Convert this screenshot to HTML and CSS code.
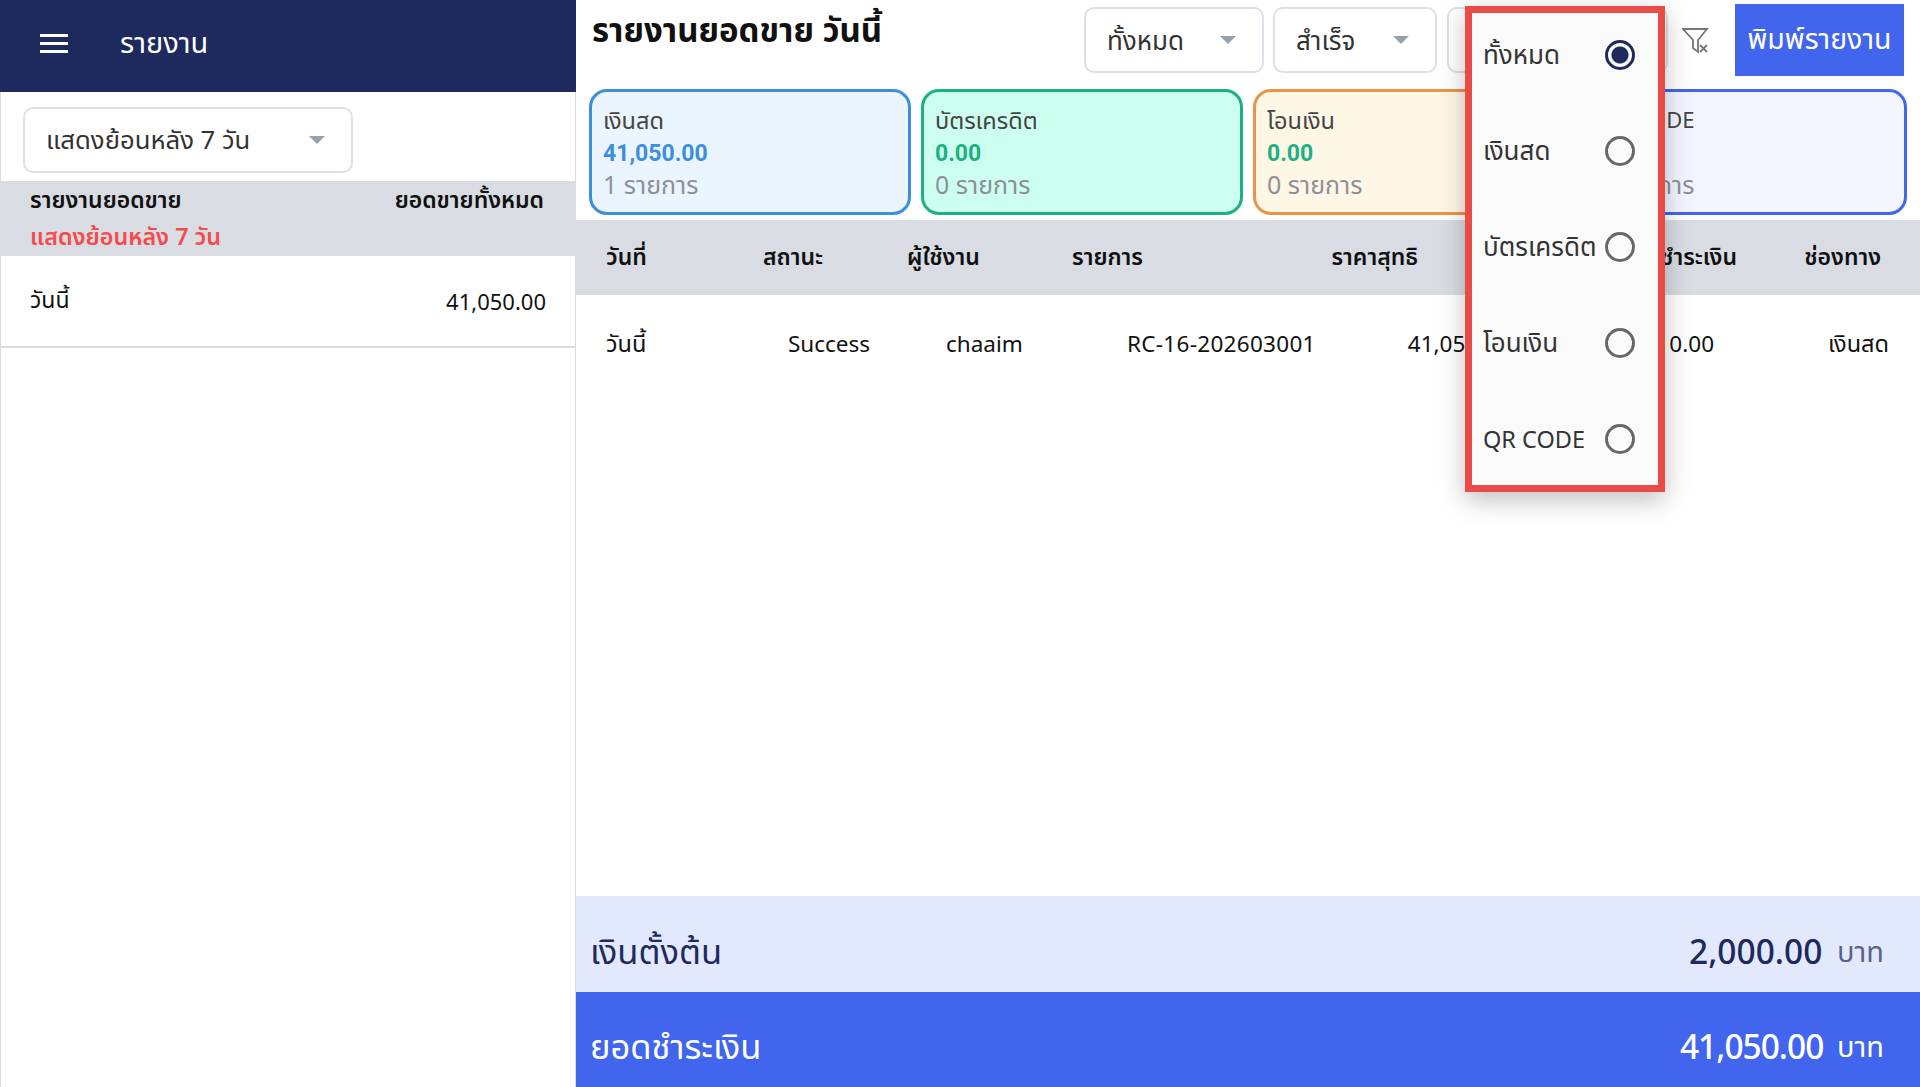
FILE: index.html
```html
<!DOCTYPE html>
<html lang="th">
<head>
    <meta charset="UTF-8">
    <title>รายงาน</title>
    <link rel="stylesheet" href="styles.css">
</head>
<body>
    <div class="app">
        <aside class="sidebar">
            <header class="side-header">
                <svg class="menu-icon" width="28" height="19" viewBox="0 0 28 19"><path d="M0 1.5h28M0 9.5h28M0 17.5h28" stroke="#fff" stroke-width="3"/></svg>
                <span class="side-title">รายงาน</span>
            </header>
            <div class="side-filter">
                <div class="select select-range">
                    <span>แสดงย้อนหลัง 7 วัน</span>
                    <i class="caret"></i>
                </div>
            </div>
            <div class="side-band">
                <div class="band-top">
                    <span>รายงานยอดขาย</span>
                    <span>ยอดขายทั้งหมด</span>
                </div>
                <div class="band-note">แสดงย้อนหลัง 7 วัน</div>
            </div>
            <div class="side-row">
                <span class="side-day">วันนี้</span>
                <span class="side-total">41,050.00</span>
            </div>
        </aside>

        <main class="content">
            <div class="topbar">
                <h1>รายงานยอดขาย วันนี้</h1>
                <div class="select select-a"><span>ทั้งหมด</span><i class="caret"></i></div>
                <div class="select select-b"><span>สำเร็จ</span><i class="caret"></i></div>
                <div class="select select-c"><span>ทั้งหมด</span><i class="caret"></i></div>
                <svg class="filter-icon" width="28" height="26" viewBox="0 0 28 26" fill="none" stroke="#777" stroke-width="1.8">
                    <path d="M1 1h24l-9 11v12l-5-4v-8z"/>
                    <path d="M18 17l7 7M25 17l-7 7"/>
                </svg>
                <button class="print-btn">พิมพ์รายงาน</button>
            </div>

            <div class="cards">
                <div class="card card-blue">
                    <div class="card-label">เงินสด</div>
                    <div class="card-value">41,050.00</div>
                    <div class="card-count">1 รายการ</div>
                </div>
                <div class="card card-green">
                    <div class="card-label">บัตรเครดิต</div>
                    <div class="card-value">0.00</div>
                    <div class="card-count">0 รายการ</div>
                </div>
                <div class="card card-orange">
                    <div class="card-label">โอนเงิน</div>
                    <div class="card-value">0.00</div>
                    <div class="card-count">0 รายการ</div>
                </div>
                <div class="card card-indigo">
                    <div class="card-label card-latin">QR CODE</div>
                    <div class="card-value">0.00</div>
                    <div class="card-count">0 รายการ</div>
                </div>
            </div>

            <div class="thead">
                <span>วันที่</span>
                <span>สถานะ</span>
                <span>ผู้ใช้งาน</span>
                <span>รายการ</span>
                <span class="right">ราคาสุทธิ</span>
                <span class="right">ยอดชำระเงิน</span>
                <span class="right">ช่องทาง</span>
            </div>
            <div class="trow">
                <span class="cell-th">วันนี้</span>
                <span>Success</span>
                <span>chaaim</span>
                <span class="cell-id">RC-16-202603001</span>
                <span class="right">41,050.00</span>
                <span class="right">0.00</span>
                <span class="right cell-th">เงินสด</span>
            </div>

            <div class="summary">
                <div class="sum-row sum-light">
                    <span>เงินตั้งต้น</span>
                    <span class="sum-amount">2,000.00 <small>บาท</small></span>
                </div>
                <div class="sum-row sum-blue">
                    <span>ยอดชำระเงิน</span>
                    <span class="sum-amount">41,050.00 <small>บาท</small></span>
                </div>
            </div>
        </main>
    </div>

    <div class="popup">
        <label class="opt"><span>ทั้งหมด</span><i class="radio on"></i></label>
        <label class="opt"><span>เงินสด</span><i class="radio"></i></label>
        <label class="opt"><span>บัตรเครดิต</span><i class="radio"></i></label>
        <label class="opt"><span>โอนเงิน</span><i class="radio"></i></label>
        <label class="opt opt-latin"><span>QR CODE</span><i class="radio"></i></label>
    </div>
</body>
</html>
```

FILE: styles.css
```css
* {
    box-sizing: border-box;
}

body {
    margin: 0;
    height: 1087px;
    overflow: hidden;
    background: #fff;
    color: #111;
    font-family: 'Noto Sans Thai', 'Noto Sans', 'Noto Sans CJK SC', sans-serif;
}

.app {
    display: flex;
    height: 1087px;
}

.sidebar {
    width: 576px;
    flex: none;
    border-left: 1px solid #ddd;
    border-right: 1px solid #ddd;
}

.side-header {
    height: 92px;
    margin-left: -1px;
    margin-right: -1px;
    background: #1e2a5e;
    color: #fff;
    display: flex;
    align-items: center;
    padding-left: 40px;
    gap: 52px;
}

.menu-icon {
    margin-bottom: 5px;
}

.side-title {
    font-size: 29px;
    margin-bottom: 4px;
}

.side-filter {
    padding: 15px 0 8px 22px;
}

.select {
    height: 66px;
    border: 2px solid #dde0e6;
    border-radius: 10px;
    background: #fff;
    display: flex;
    align-items: center;
    justify-content: space-between;
    padding: 3px 26px 0 21px;
    font-size: 26px;
    color: #333;
}

.caret {
    width: 0;
    height: 0;
    margin-bottom: 3px;
    border-left: 8px solid transparent;
    border-right: 8px solid transparent;
    border-top: 8px solid #98a0aa;
}

.select-range {
    width: 330px;
    font-size: 25.7px;
}

.side-band {
    height: 75px;
    background: #d9dce3;
    padding: 3px 31px 0 29px;
    font-size: 23px;
    font-weight: 600;
}

.band-top {
    display: flex;
    justify-content: space-between;
}

.band-note {
    color: #f44c4c;
    font-size: 23.3px;
    margin-top: 2px;
}

.side-row {
    height: 92px;
    border-bottom: 2px solid #ddd;
    padding: 0 29px;
    display: flex;
    align-items: center;
    justify-content: space-between;
    font-size: 22px;
}

.side-day {
    font-size: 23px;
}

.side-total {
    padding-top: 4px;
}

.content {
    flex: 1;
    min-width: 0;
    display: flex;
    flex-direction: column;
}

.topbar {
    height: 89px;
    display: flex;
    align-items: flex-start;
    padding: 7px 16px 0 16px;
}

.topbar h1 {
    margin: 0;
    font-size: 33px;
    font-weight: 700;
    line-height: 50px;
    width: 492px;
    flex: none;
    white-space: nowrap;
}

.select-a {
    width: 180px;
}

.select-b {
    width: 164px;
    margin-left: 9px;
}

.select-c {
    width: 221px;
    margin-left: 10px;
}

.filter-icon {
    margin: 21px 0 0 14px;
}

.print-btn {
    width: 169px;
    height: 72px;
    margin: -3px 0 0 25px;
    padding: 0;
    border: none;
    background: #4165ec;
    color: #fff;
    font: inherit;
    font-size: 28.5px;
    white-space: nowrap;
}

.cards {
    display: flex;
    gap: 10px;
    padding: 0 13px;
}

.card {
    width: 322px;
    height: 126px;
    border: 3px solid;
    border-radius: 18px;
    padding: 14px 11px 0;
}

.card-blue {
    border-color: #3c8fdd;
    background: #ebf5ff;
}

.card-green {
    border-color: #1cb083;
    background: #ccfff0;
}

.card-orange {
    border-color: #ea9445;
    background: #fff7e6;
}

.card-indigo {
    border-color: #4165ec;
    background: #f2f5ff;
}

.card-label {
    font-size: 23.5px;
    line-height: 32px;
    color: #444;
}

.card-latin {
    font-size: 22px;
}

.card-value {
    font-family: Roboto, sans-serif;
    font-size: 23px;
    font-weight: 700;
    line-height: 32px;
    color: #1cb083;
}

.card-blue .card-value {
    color: #3c8fdd;
}

.card-count {
    font-size: 25px;
    line-height: 32px;
    color: #8c9096;
}

.thead,
.trow {
    display: grid;
    align-items: center;
    padding-left: 30px;
}

.thead {
    height: 75px;
    margin-top: 5px;
    background: #d9dce3;
    font-size: 23px;
    font-weight: 600;
    grid-template-columns: 157px 144px 165px 200px 146px 319px 144px;
}

.trow {
    height: 100px;
    font-size: 22.5px;
    grid-template-columns: 182px 158px 181px 200px 183px 204px 175px;
}

.cell-th {
    font-size: 23.5px;
}

.cell-id {
    letter-spacing: 0.3px;
    white-space: nowrap;
}

.right {
    text-align: right;
}

.summary {
    margin-top: auto;
}

.sum-row {
    height: 96px;
    display: flex;
    align-items: center;
    justify-content: space-between;
    padding: 18px 36px 0 14px;
    font-size: 34.5px;
}

.sum-light {
    background: #e3e9fd;
    color: #1e2a5e;
}

.sum-blue {
    height: 95px;
    background: #4165ec;
    color: #fff;
}

.sum-amount {
    font-size: 33.5px;
    font-weight: 500;
}

.sum-blue .sum-amount {
    letter-spacing: -1px;
}

.sum-amount small {
    font-size: 29px;
    font-weight: 400;
    letter-spacing: 0;
    margin-left: 6px;
    opacity: 0.7;
    position: relative;
    top: -2px;
}

.sum-blue small {
    opacity: 1;
}

/* popup sits over the page */
.popup {
    position: absolute;
    left: 1465px;
    top: 6px;
    width: 200px;
    height: 486px;
    border: 7px solid #e94b47;
    background: #fafafa;
    box-shadow: 0 8px 24px rgba(0, 0, 0, 0.25);
    padding: 24px 23px 0 11px;
    display: flex;
    flex-direction: column;
    gap: 60px;
}

.opt {
    height: 36px;
    display: flex;
    align-items: center;
    justify-content: space-between;
    font-size: 26px;
    color: #333;
    white-space: nowrap;
}

.opt span {
    padding-top: 2px;
}

.opt-latin {
    font-size: 23.5px;
}

.opt-latin span {
    padding-top: 4px;
}

.radio {
    width: 30px;
    height: 30px;
    border: 3px solid #666;
    border-radius: 50%;
    flex: none;
    background: #fafafa;
}

.radio.on {
    border-color: #1e2a5e;
    background: radial-gradient(circle, #1e2a5e 0 8px, #fafafa 9px);
}
```
